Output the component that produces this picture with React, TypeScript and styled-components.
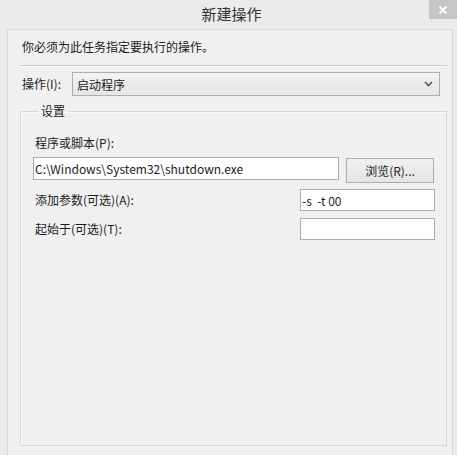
import React from "react";
import styled, { createGlobalStyle } from "styled-components";

const Global = createGlobalStyle`
  html, body { margin: 0; padding: 0; background: #ebebeb; }
  body { width: 457px; height: 455px; overflow: hidden; font-family: "Noto Sans CJK SC", "Noto Sans", sans-serif; font-size: 12px; color: #1b1b1b; }
  * { box-sizing: border-box; }
`;

const Window = styled.div`
  height: 455px;
  display: flex;
  flex-direction: column;
  padding: 0 4px 0 7px;
  background: #ebebeb;
`;

const TitleBar = styled.div`
  position: relative;
  height: 29px;
  display: flex;
  align-items: center;
  justify-content: center;
  padding-left: 3px;
`;

const Title = styled.div`
  font-size: 15px;
  color: #333;
  line-height: 20px;
  margin-top: -2px;
`;

const CloseButton = styled.div`
  position: absolute;
  top: 0;
  right: -4px;
  width: 28px;
  height: 19px;
  background: #c6c6c6;
  display: flex;
  align-items: center;
  justify-content: center;
`;

const Panel = styled.div`
  flex: 1;
  background: #f0f0f0;
  border: 1px solid #d9d9d9;
  border-bottom: none;
  padding: 8px 5px 0 12px;
  display: flex;
  flex-direction: column;
`;

const Intro = styled.div`
  line-height: 18px;
  padding-left: 2px;
`;

const Separator = styled.div`
  height: 1px;
  background: #c9c9c9;
  margin-top: 9px;
  box-shadow: 0 1px 0 #fafafa;
`;

const OpRow = styled.div`
  display: flex;
  align-items: center;
  margin-top: 6px;
`;

const OpLabel = styled.div`
  width: 52px;
  padding-left: 2px;
  line-height: 18px;
`;

const Select = styled.div`
  width: 368px;
  height: 24px;
  border: 1px solid #adadad;
  background: linear-gradient(#f2f2f2, #e6e6e6);
  display: flex;
  align-items: center;
  justify-content: space-between;
  padding: 0 6px 0 4px;
`;

const Group = styled.fieldset`
  margin: 6px 0 9px 0;
  padding: 14px 12px 0 12px;
  border: 1px solid #d6d6d6;
  box-shadow: inset 1px 1px 0 #fafafa;
  flex: 1;
  min-width: 0;
`;

const Legend = styled.legend`
  padding: 0 3px;
  margin-left: 5px;
  line-height: 18px;
`;

const FieldLabel = styled.div`
  line-height: 18px;
  padding-left: 2px;
`;

const PathRow = styled.div`
  display: flex;
  align-items: flex-start;
  gap: 7px;
  margin-top: 5px;
`;

const TextBox = styled.div<{ $w: number; $h: number }>`
  width: ${(p) => p.$w}px;
  height: ${(p) => p.$h}px;
  border: 1px solid #acacac;
  background: #fff;
  display: flex;
  align-items: center;
  padding-left: 1px;
  font-size: 12px;
  white-space: pre;
  overflow: hidden;
`;

const Button = styled.div`
  width: 88px;
  height: 25px;
  margin-top: 1px;
  border: 1px solid #acacac;
  background: linear-gradient(#f0f0f0, #e5e5e5);
  display: flex;
  align-items: center;
  justify-content: center;
  color: #222;
`;

const ArgsGrid = styled.div`
  display: grid;
  grid-template-columns: 1fr 135px;
  row-gap: 7px;
  align-items: center;
  margin-top: 6px;
  width: 402px;
`;

export default function App() {
  return (
    <>
      <Global />
      <Window>
        <TitleBar>
          <Title>新建操作</Title>
          <CloseButton>
            <svg width="10" height="10" viewBox="0 0 10 10">
              <path d="M1.5 1.5 L8.5 8.5 M8.5 1.5 L1.5 8.5" stroke="#fff" strokeWidth="1.8" />
            </svg>
          </CloseButton>
        </TitleBar>
        <Panel>
          <Intro>你必须为此任务指定要执行的操作。</Intro>
          <Separator />
          <OpRow>
            <OpLabel>操作(I):</OpLabel>
            <Select>
              <span>启动程序</span>
              <svg width="9" height="6" viewBox="0 0 9 6">
                <path d="M1 1 L4.5 4.5 L8 1" stroke="#555" strokeWidth="1.6" fill="none" />
              </svg>
            </Select>
          </OpRow>
          <Group>
            <Legend>设置</Legend>
            <FieldLabel>程序或脚本(P):</FieldLabel>
            <PathRow>
              <TextBox $w={306} $h={23}>C:\Windows\System32\shutdown.exe</TextBox>
              <Button>浏览(R)...</Button>
            </PathRow>
            <ArgsGrid>
              <FieldLabel>添加参数(可选)(A):</FieldLabel>
              <TextBox $w={135} $h={22}>-s  -t 00</TextBox>
              <FieldLabel>起始于(可选)(T):</FieldLabel>
              <TextBox $w={135} $h={22}></TextBox>
            </ArgsGrid>
          </Group>
        </Panel>
      </Window>
    </>
  );
}
